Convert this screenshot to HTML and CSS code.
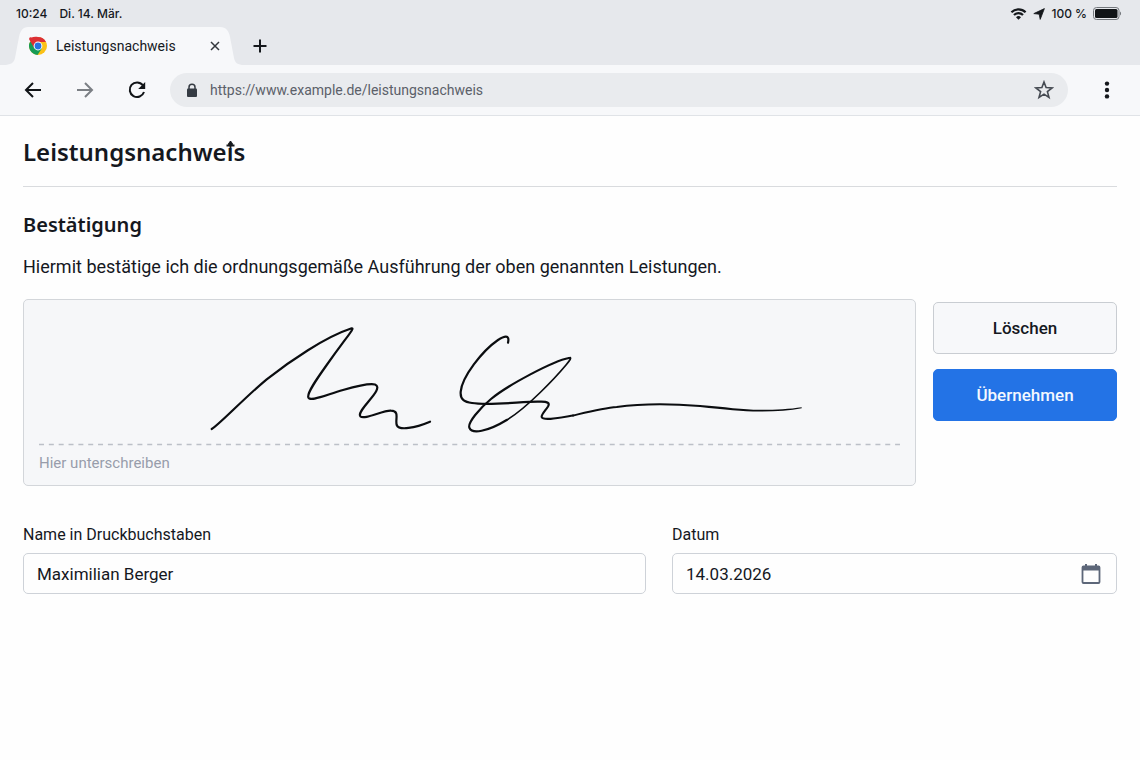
FILE: index.html
```html
<!DOCTYPE html>
<html lang="de">
<head>
<meta charset="utf-8">
<meta name="viewport" content="width=device-width, initial-scale=1">
<title>Leistungsnachweis</title>
<link rel="stylesheet" href="styles.css">
</head>
<body>
<header class="browser">
  <div class="status">
    <span>10:24</span>
    <span>Di. 14. Mär.</span>
    <div class="status-right">
      <svg width="17" height="12" viewBox="0 0 16 12" fill="none" stroke="#15181c" stroke-width="2.2" aria-hidden="true"><path d="M.9 4.300a10 10 0 0 1 14.200 0M3.500 7a6.300 6.300 0 0 1 9 0"/><path d="M8 11.800 5.500 9.200a3.600 3.600 0 0 1 5 0z" fill="#15181c" stroke="none"/></svg>
      <svg width="12" height="12" viewBox="0 0 12 12" fill="#15181c" stroke="#15181c" stroke-width=".8" stroke-linejoin="round" aria-hidden="true"><path d="M11.400.6 7.200 11.400 6.200 6.200.8 5.600z"/></svg>
      <span>100 %</span>
      <svg width="29" height="13" viewBox="0 0 29 13" aria-hidden="true"><rect x=".5" y=".5" width="25.500" height="12" rx="3" fill="none" stroke="#73777c"/><rect x="2" y="2" width="22.500" height="9" rx="1.500" fill="#111417"/><path d="M27 4.500c1.400.5 1.400 3.500 0 4z" fill="#73777c"/></svg>
    </div>
  </div>
  <div class="tabs">
    <div class="tab">
      <svg class="tab-shape" width="24" height="38" viewBox="0 0 24 38" aria-hidden="true"><path d="M0 38c6 0 10-2 11-7l4-21c1-6 4-10 9-10v38z"/></svg>
      <div class="tab-body">
        <svg width="20" height="20" viewBox="0 0 20 20" aria-hidden="true"><circle cx="10" cy="10" r="9" fill="#fbc116"/><path d="M2.200 5.500A9 9 0 0 0 9.500 19L14 12.200 10 10z" fill="#159b55"/><path d="M1.200 3.500C1 1.500 2 .8 3.500 1.500 5 .9 7 .7 10 1a9 9 0 0 1 8 5h-8L6.200 12z" fill="#dc3034"/><circle cx="10" cy="10" r="4.400" fill="#fff"/><circle cx="10" cy="10" r="3.400" fill="#2673df"/></svg>
        <span class="tab-title">Leistungsnachweis</span>
        <button class="icon-button" type="button" aria-label="Tab schließen"><svg width="10" height="10" viewBox="0 0 10 10" stroke="#33373c" stroke-width="1.500"><path d="m1 1 8 8M9 1 1 9"/></svg></button>
      </div>
      <svg class="tab-shape" width="24" height="38" viewBox="0 0 24 38" aria-hidden="true"><path d="M24 38c-6 0-9-2-10-7L10 10C9 4 6 0 0 0v38z"/></svg>
    </div>
    <button class="icon-button new-tab" type="button" aria-label="Neuer Tab"><svg width="14" height="14" viewBox="0 0 14 14" stroke="#15181c" stroke-width="2"><path d="M7 .5v13M.5 7h13"/></svg></button>
  </div>
  <nav class="toolbar" aria-label="Navigation">
    <button class="icon-button" type="button" aria-label="Zurück"><svg width="18" height="18" viewBox="0 0 18 18" fill="none" stroke="#111417" stroke-width="2"><path d="M17 9H2M9 2 2 9l7 7"/></svg></button>
    <button class="icon-button" type="button" aria-label="Vorwärts"><svg width="18" height="18" viewBox="0 0 18 18" fill="none" stroke="#7b7f84" stroke-width="2"><path d="M1 9h15M9 2l7 7-7 7"/></svg></button>
    <button class="icon-button" type="button" aria-label="Neu laden"><svg width="18" height="18" viewBox="0 0 18 18" fill="none" stroke="#111417" stroke-width="2"><path d="M14.800 4.200A7.300 7.300 0 1 0 16 11"/><path d="M17.200 1v7h-7z" fill="#111417" stroke="none"/></svg></button>
    <div class="address">
      <svg width="12" height="15" viewBox="0 0 12 15" aria-hidden="true"><rect x="1" y="5.500" width="10" height="8.500" rx="1" fill="#353b43"/><path d="M3 6V4.200a3 3 0 0 1 6 0V6" fill="none" stroke="#353b43" stroke-width="1.500"/></svg>
      <input class="address-input" type="text" aria-label="Adresse" value="https://www.example.de/leistungsnachweis">
      <button class="icon-button" type="button" aria-label="Lesezeichen"><svg width="20" height="20" viewBox="0 0 20 20" fill="none" stroke="#454a52" stroke-width="1.600"><path d="m10 2 2.100 5.600 6 .3-4.700 3.700 1.600 5.800-5-3.300-5 3.300 1.600-5.800L1.900 7.900l6-.3z"/></svg></button>
    </div>
    <button class="icon-button" type="button" aria-label="Menü"><svg width="6" height="18" viewBox="0 0 6 18" fill="#15181c"><circle cx="3" cy="2.600" r="2.200"/><circle cx="3" cy="9" r="2.200"/><circle cx="3" cy="15.400" r="2.200"/></svg></button>
  </nav>
</header>
<main class="page">
  <h1 class="title">Leistungsnachwe<span class="crossed">i<svg class="cross" width="9" height="7" viewBox="0 0 9 7" fill="none" stroke="#15181e" stroke-width="1.800" aria-hidden="true"><path d="M.5 4.500h8M4.500 0v7M2.500 3.500l2-2.500 2 2.500"/></svg></span>s</h1>
  <h2 class="subtitle">Bestätigung</h2>
  <p class="statement">Hiermit bestätige ich die ordnungsgemäße Ausführung der oben genannten Leistungen.</p>
  <div class="signing">
    <div class="pad">
      <svg class="signature" viewBox="39 315 861 131" role="img" aria-label="Unterschrift" fill="none" stroke="#0b0d10" stroke-width="2.200" stroke-linecap="round" stroke-linejoin="round">
        <path d="M211.700 429C220 424 243 399 266.700 379.300C290 361 325 337 351.700 328.300C355 328 348 335 326.700 365C316 380 307 393 308.300 397.300C310 402 323 396 343 390C357 386 370 383 375 384.500C381 387 374 395 368.300 401.700C363 408 358 414 360.500 416.500C364 420 384 410 391 410.700C400 411 395 419 396.700 425C399 431 415 428 430 421.700"/>
        <path d="M508 342.700C510 334 504 336 498 340C482 351 462 377 460.700 391.700C460 400 465 402 472 403C490 406 526 401 540 401.700C548 401.500 550 403 548 406.500C545 411 541 415 541.700 417C543 421 558 418 573 415.500"/>
        <path d="M569 358C553 361 508 385 491 399C480 408 467 423 469.500 428C472 434 487 432 506.700 420"/>
        <path stroke-width="1.700" d="M506.700 420C527 408 556 377 566 365C572 358 571 357 569 358"/>
        <path stroke-width="2" d="M573 415.500C588 412 604 408 616.700 407C645 403 670 403.500 700 406"/>
        <path d="M700 405C725 407 745 410 761 409.800C775 409.800 790 409 801.700 407.200V408.200C790 410.500 776 411.500 761 411.600C745 411.800 725 409.500 700 407z" fill="#0b0d10" stroke="none"/>
        <path d="M39 444.500h861" stroke="#bcc0c8" stroke-width="1.500" stroke-dasharray="5 4.840" stroke-linecap="butt"/>
      </svg>
      <span class="pad-hint">Hier unterschreiben</span>
    </div>
    <div class="actions">
      <button class="button" type="button">Löschen</button>
      <button class="button primary" type="button">Übernehmen</button>
    </div>
  </div>
  <form class="fields">
    <div class="field">
      <label for="name">Name in Druckbuchstaben</label>
      <div class="control"><input id="name" type="text" value="Maximilian Berger"></div>
    </div>
    <div class="field">
      <label for="date">Datum</label>
      <div class="control">
        <input id="date" type="text" value="14.03.2026">
        <button class="icon-button" type="button" aria-label="Kalender öffnen"><svg width="20" height="22" viewBox="0 0 20 22"><rect x="1.500" y="3.500" width="17" height="16.500" rx="1" fill="none" stroke="#5d6779" stroke-width="1.800"/><path d="M1 3h18v4.500H1zM4 1h2v3H4zM14 1h2v3h-2z" fill="#5d6779"/></svg></button>
      </div>
    </div>
  </form>
</main>
</body>
</html>
```
FILE: styles.css
```css
* { box-sizing: border-box; }
body {
  margin: 0;
  background: #fefefe;
  color: #15181e;
  font-family: Roboto, "Liberation Sans", sans-serif;
  font-size: 17px;
}
button, input { font: inherit; color: inherit; }
svg { flex: none; }
.icon-button {
  display: flex;
  align-items: center;
  justify-content: center;
  flex: none;
  padding: 0;
  border: 0;
  background: none;
}

.browser { background: #e6e8ec; }
.status {
  display: flex;
  align-items: center;
  gap: 12px;
  height: 27px;
  padding: 0 18px 0 16px;
  font-family: Inter, "Liberation Sans", sans-serif;
  font-size: 12px;
  font-weight: 500;
}
.status-right { display: flex; align-items: center; gap: 6px; margin-left: auto; }
.tabs { display: flex; height: 38px; padding-left: 4px; }
.tab { display: flex; }
.tab-shape { fill: #f7f8fa; }
.tab-body {
  display: flex;
  align-items: center;
  gap: 8px;
  width: 192px;
  background: #f7f8fa;
}
.tab-title { flex: 1; font-size: 14px; }
.new-tab { margin-left: 9px; }
.toolbar {
  display: flex;
  align-items: center;
  height: 51px;
  padding: 0 30px 0 24px;
  gap: 34px;
  background: #f7f8fa;
  border-bottom: 1px solid #e0e3e7;
}
.address {
  display: flex;
  align-items: center;
  flex: 1;
  min-width: 0;
  height: 34px;
  margin: 0 2px 0 -10px;
  padding: 0 14px 0 16px;
  gap: 12px;
  border-radius: 17px;
  background: #e9ebee;
}
.address-input {
  flex: 1;
  min-width: 0;
  padding: 0;
  border: 0;
  background: none;
  color: #5b6069;
  font-size: 14px;
}

.page { padding: 16px 23px 24px; }
.title, .subtitle { font-family: "Noto Sans", sans-serif; font-weight: 600; }
.title {
  margin: 0;
  padding-bottom: 14px;
  border-bottom: 1px solid #d9dbde;
  font-size: 24px;
  font-weight: 600;
  line-height: 40px;
}
.crossed { position: relative; }
.cross { position: absolute; top: 6px; left: -1px; }
.subtitle { margin: 23px 0 0; font-size: 20px; line-height: 30px; }
.statement { margin: 15px 0 20px; font-size: 18px; line-height: 24px; }
.signing { display: flex; align-items: flex-start; gap: 17px; }
.pad {
  flex: 1;
  min-width: 0;
  padding: 15px 15px 5px;
  border: 1px solid #d3d6da;
  border-radius: 5px;
  background: #f6f7f9;
}
.signature { display: block; width: 100%; }
.pad-hint { display: block; color: #989dab; font-size: 15px; line-height: 34px; }
.actions { display: grid; gap: 15px; width: 184px; padding-top: 3px; }
.button {
  height: 52px;
  border: 1px solid #c9cdd2;
  border-radius: 5px;
  background: #f7f8fa;
  font-weight: 500;
}
.primary { border-color: #2373e6; background: #2373e6; color: #f3f8ff; }
.fields {
  display: grid;
  grid-template-columns: 7fr 5fr;
  gap: 26px;
  margin-top: 38px;
}
.field { display: grid; gap: 7px; }
.field label { font-size: 16px; line-height: 22px; }
.control {
  display: flex;
  align-items: center;
  height: 41px;
  padding: 0 15px 0 13px;
  border: 1px solid #ced2d8;
  border-radius: 5px;
}
.control input { flex: 1; min-width: 0; padding: 0; border: 0; background: none; }
```
